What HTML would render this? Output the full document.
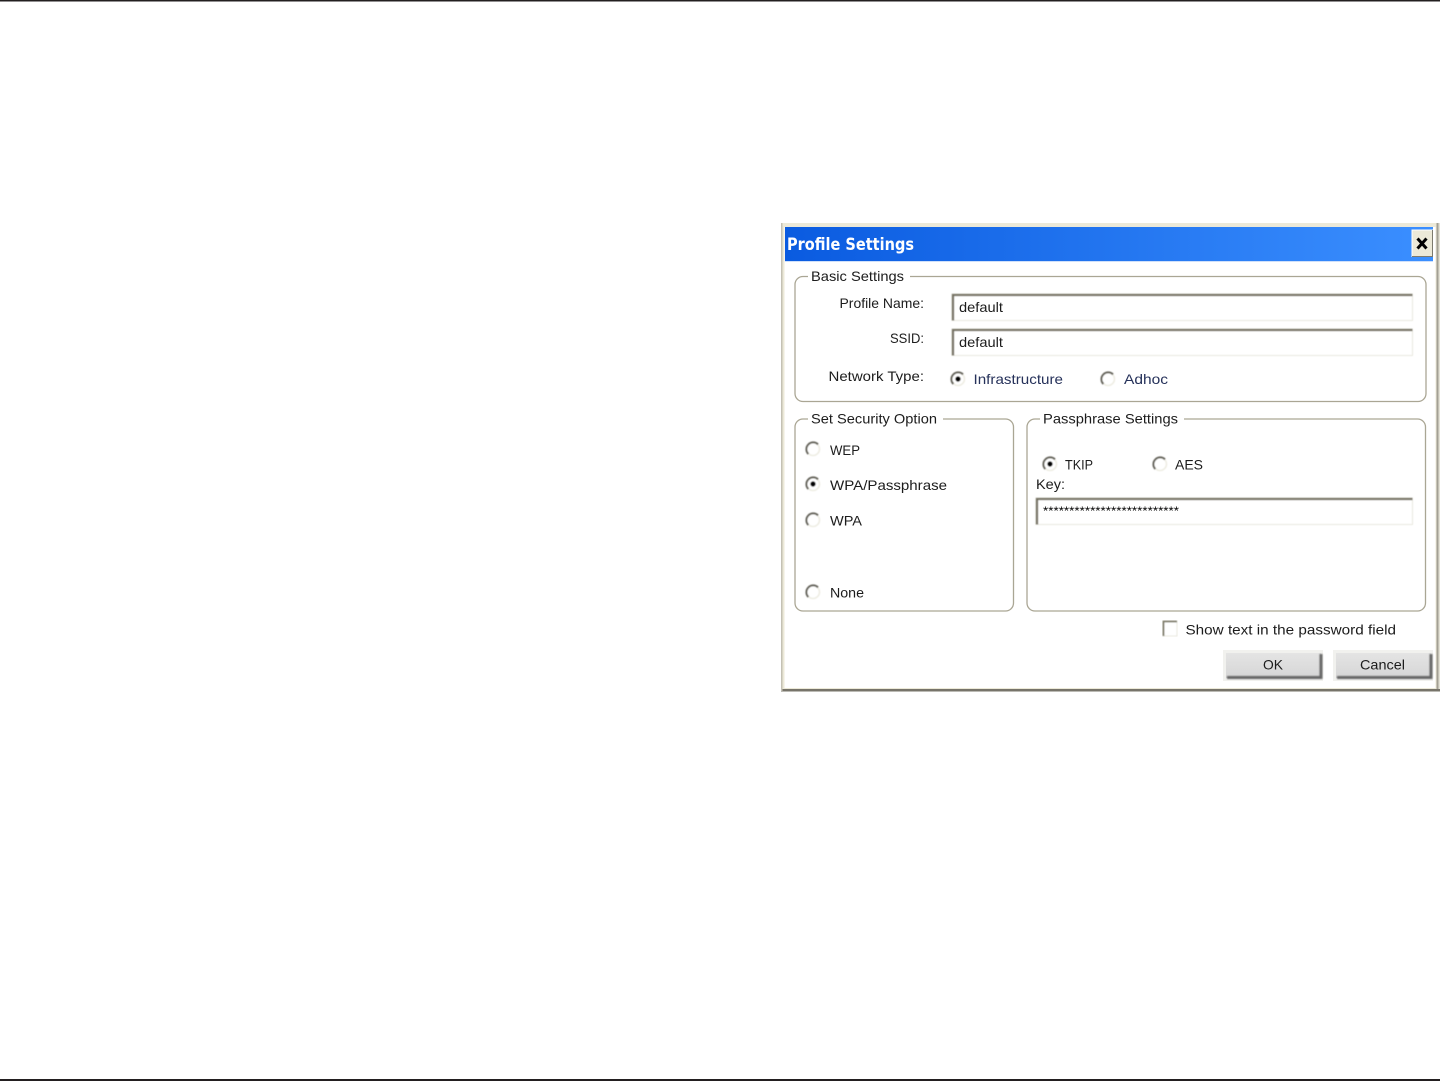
<!DOCTYPE html>
<html lang="en">
<head>
<meta charset="utf-8">
<title>Profile Settings</title>
<style>
html,body{margin:0;padding:0;background:#fff;width:1440px;height:1081px;overflow:hidden}
svg{display:block}
text{font-family:"Liberation Sans",sans-serif;font-size:14px;fill:#1c1c1c}
.box{fill:none;stroke:#aaa694;stroke-width:1.3}
.gap{fill:#fff}
.t{filter:url(#soft)}
</style>
</head>
<body>
<svg width="1440" height="1081" viewBox="0 0 1440 1081" xmlns="http://www.w3.org/2000/svg">
<defs>
<linearGradient id="tb" x1="0" x2="1" y1="0" y2="0"><stop offset="0" stop-color="#0a5be0"/><stop offset="1" stop-color="#3b8fff"/></linearGradient>
<linearGradient id="btn" x1="0" x2="0" y1="0" y2="1"><stop offset="0" stop-color="#e4e4e4"/><stop offset="1" stop-color="#d6d6d6"/></linearGradient>
<filter id="soft" x="-5%" y="-20%" width="110%" height="140%"><feGaussianBlur stdDeviation="0.35"/></filter>
<filter id="soft2" x="-10%" y="-10%" width="120%" height="120%"><feGaussianBlur stdDeviation="0.7"/></filter>
<filter id="soft3" x="-5%" y="-5%" width="110%" height="110%"><feGaussianBlur stdDeviation="0.4"/></filter>
<g id="radio">
  <circle r="6.500" fill="#fff" stroke="#eeede3" stroke-width="1.600"/>
  <path d="M5 -4.600A6.500 6.500 0 0 0 -4.600 5" fill="none" stroke="#66655c" stroke-width="2"/>
</g>
</defs>

<!-- page rules -->
<rect x="0" y="0" width="1440" height="1.500" fill="#231f20"/>
<rect x="0" y="1079" width="1440" height="2" fill="#231f20"/>

<!-- dialog frame -->
<rect x="781" y="223" width="659" height="468" fill="#ece9d8"/>
<rect x="1436.500" y="223" width="2" height="468" fill="#a3a094"/>
<rect x="1438.500" y="223" width="1.500" height="468" fill="#e4e2d6"/>
<rect x="781" y="689" width="659" height="2.500" fill="#77746a"/>
<rect x="781" y="223" width="1.500" height="468" fill="#c4c1b4"/>
<rect x="784.500" y="227" width="651" height="461" fill="#fff"/>
<rect x="785" y="227" width="648" height="34" fill="url(#tb)"/>
<rect x="785" y="261" width="648" height="1" fill="#cfe0fa"/>

<text x="787" y="250" font-weight="700" style="font-family:'DejaVu Sans',sans-serif;font-size:17px;fill:#fff" textLength="127" lengthAdjust="spacingAndGlyphs" class="t">Profile Settings</text>

<!-- close -->
<rect x="1412" y="230" width="21" height="27" fill="#ece9d8"/>
<path d="M1412 257V230H1433" fill="none" stroke="#fff" stroke-width="1"/>
<path d="M1432.500 230V256.500H1412" fill="none" stroke="#7c7a6e" stroke-width="1"/>
<path d="M1417.500 238.500L1426.500 248.500M1426.500 238.500L1417.500 248.500" stroke="#000" stroke-width="3" fill="none"/>

<!-- group boxes -->
<rect class="box" x="795" y="276.500" width="631" height="125" rx="8"/>
<rect class="gap" x="808" y="270" width="102" height="12"/>
<rect class="box" x="795" y="419" width="218.500" height="192" rx="8"/>
<rect class="gap" x="808" y="413" width="135" height="12"/>
<rect class="box" x="1027" y="419" width="398.500" height="192" rx="8"/>
<rect class="gap" x="1040" y="413" width="144" height="12"/>

<!-- inputs -->
<g filter="url(#soft3)">
  <rect x="952" y="294" width="460.500" height="26.500" fill="#fff" stroke="#e9e8df"/>
  <path d="M953 320.500V295H1412.500" fill="none" stroke="#757162" stroke-width="2.300"/>
  <rect x="952" y="329" width="460.500" height="26.500" fill="#fff" stroke="#e9e8df"/>
  <path d="M953 355.500V330H1412.500" fill="none" stroke="#757162" stroke-width="2.300"/>
  <rect x="1036" y="498" width="376.500" height="26.500" fill="#fff" stroke="#e9e8df"/>
  <path d="M1037 524.500V499H1412.500" fill="none" stroke="#757162" stroke-width="2.300"/>
</g>

<!-- radios -->
<g filter="url(#soft3)">
<use href="#radio" x="958" y="379"/><circle cx="958" cy="379" r="2.700" fill="#000"/>
<use href="#radio" x="1108" y="379"/>
<use href="#radio" x="813" y="449"/>
<use href="#radio" x="813" y="484"/><circle cx="813" cy="484" r="2.700" fill="#000"/>
<use href="#radio" x="813" y="520"/>
<use href="#radio" x="813" y="592"/>
<use href="#radio" x="1050" y="464"/><circle cx="1050" cy="464" r="2.700" fill="#000"/>
<use href="#radio" x="1160" y="464"/>
</g>

<!-- checkbox -->
<g filter="url(#soft3)">
<rect x="1163" y="621" width="14" height="15" fill="#fff" stroke="#e9e8df"/>
<path d="M1163.500 636V621.500H1177" fill="none" stroke="#7d7a68" stroke-width="1.800"/>
</g>

<!-- buttons -->
<rect x="1223" y="650" width="100" height="31" fill="#f1f1ee"/>
<rect x="1226" y="653" width="95" height="25" fill="url(#btn)"/>
<path d="M1321 654V677.500H1227" fill="none" stroke="#666" stroke-width="3" filter="url(#soft2)"/>
<rect x="1333" y="650" width="100" height="31" fill="#f1f1ee"/>
<rect x="1336" y="653" width="95" height="25" fill="url(#btn)"/>
<path d="M1431 654V677.500H1337" fill="none" stroke="#666" stroke-width="3" filter="url(#soft2)"/>

<!-- labels -->
<g class="t">
<text x="811" y="281" textLength="93" lengthAdjust="spacingAndGlyphs">Basic Settings</text>
<text x="839.500" y="308" textLength="84.500" lengthAdjust="spacingAndGlyphs">Profile Name:</text>
<text x="890" y="343" textLength="34" lengthAdjust="spacingAndGlyphs">SSID:</text>
<text x="828.500" y="381" textLength="95.500" lengthAdjust="spacingAndGlyphs">Network Type:</text>
<text x="959" y="312" textLength="44" lengthAdjust="spacingAndGlyphs">default</text>
<text x="959" y="347" textLength="44" lengthAdjust="spacingAndGlyphs">default</text>
<text x="973.500" y="384" textLength="89.500" lengthAdjust="spacingAndGlyphs" style="fill:#25305a">Infrastructure</text>
<text x="1124" y="384" textLength="44" lengthAdjust="spacingAndGlyphs" style="fill:#25305a">Adhoc</text>
<text x="811" y="423.500" textLength="126" lengthAdjust="spacingAndGlyphs">Set Security Option</text>
<text x="1043" y="423.500" textLength="135" lengthAdjust="spacingAndGlyphs">Passphrase Settings</text>
<text x="830" y="455" textLength="30" lengthAdjust="spacingAndGlyphs">WEP</text>
<text x="830" y="490" textLength="117" lengthAdjust="spacingAndGlyphs">WPA/Passphrase</text>
<text x="830" y="525.500" textLength="32" lengthAdjust="spacingAndGlyphs">WPA</text>
<text x="830" y="597.500" textLength="34" lengthAdjust="spacingAndGlyphs">None</text>
<text x="1065" y="469.500" textLength="28" lengthAdjust="spacingAndGlyphs">TKIP</text>
<text x="1175" y="469.500" textLength="28" lengthAdjust="spacingAndGlyphs">AES</text>
<text x="1036" y="489" textLength="29" lengthAdjust="spacingAndGlyphs">Key:</text>
<text x="1043" y="515" textLength="136" lengthAdjust="spacingAndGlyphs" style="font-size:12px;fill:#000">**************************</text>
<text x="1185.500" y="634.500" textLength="210.500" lengthAdjust="spacingAndGlyphs">Show text in the password field</text>
<text x="1263" y="669.500" textLength="20" lengthAdjust="spacingAndGlyphs">OK</text>
<text x="1360" y="669.500" textLength="45" lengthAdjust="spacingAndGlyphs">Cancel</text>
</g>
</svg>
</body>
</html>
